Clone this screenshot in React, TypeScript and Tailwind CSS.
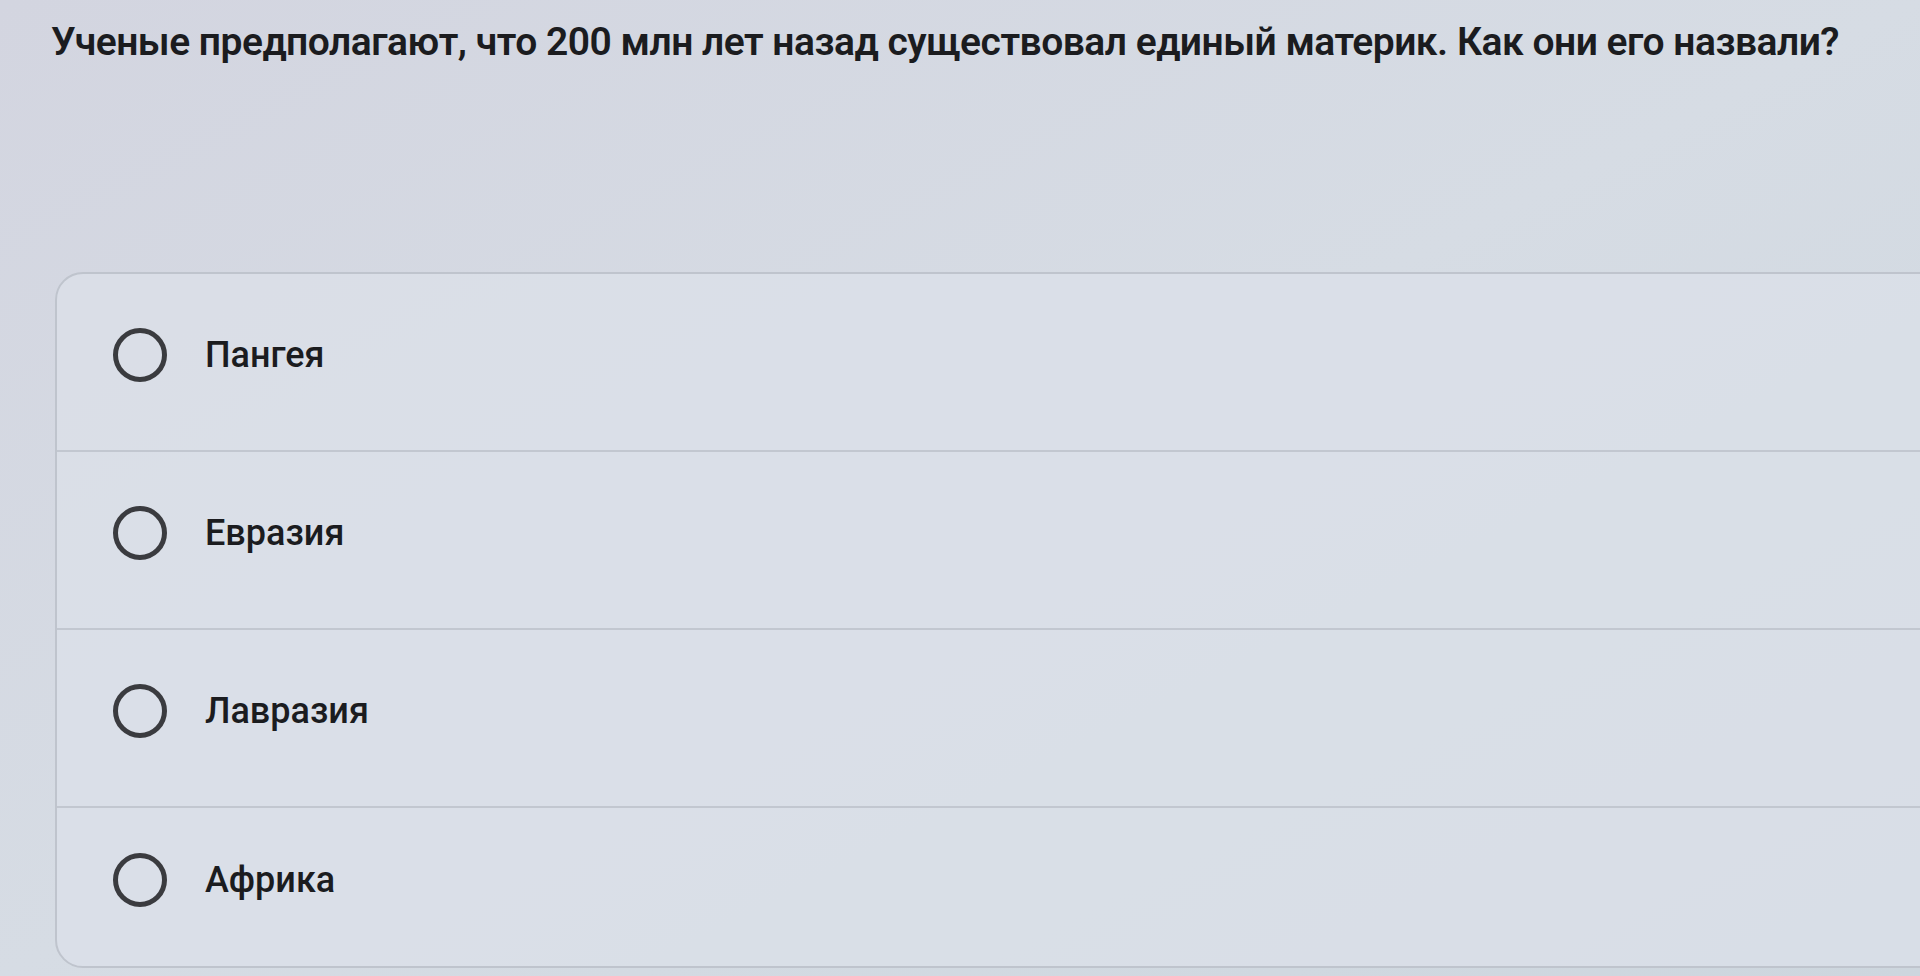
import React from "react";

const options = ["Пангея", "Евразия", "Лавразия", "Африка"];

function Radio() {
  return (
    <span className="block h-[54px] w-[54px] shrink-0 rounded-full border-[5px] border-[#3a3b3f]" />
  );
}

export default function App() {
  return (
    <div
      className="flex h-[976px] w-[1920px] flex-col overflow-hidden bg-gradient-to-br from-[#d3d5e0] via-[#d6dce4] to-[#cdd6de] text-[#1b1c1f]"
      style={{ fontFamily: "Roboto, 'Noto Sans', 'Liberation Sans', sans-serif" }}
    >
      <h1 className="pl-[51px] pt-[14px] text-[39px] font-semibold leading-[56px] tracking-[-0.5px]">
        Ученые предполагают, что 200 млн лет назад существовал единый материк. Как они его назвали?
      </h1>
      <div className="mb-[8px] ml-[55px] mr-[-40px] mt-[202px] flex flex-1 flex-col rounded-[28px] border-2 border-[#bfc4cd] bg-[#dbe0e8]/80">
        {options.map((o, i) => (
          <div
            key={o}
            className={`flex items-center gap-[38px] pb-[14px] pl-[56px] ${
              i < options.length - 1 ? "h-[178px] border-b-2 border-[#c2c7d0]" : "flex-1"
            }`}
          >
            <Radio />
            <span className="text-[36px] font-medium leading-none">{o}</span>
          </div>
        ))}
      </div>
    </div>
  );
}
